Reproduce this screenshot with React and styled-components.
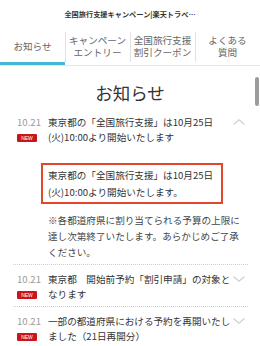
import React from 'react'
import styled, { createGlobalStyle } from 'styled-components'

const GlobalStyle = createGlobalStyle`
    body {
        margin: 0;
        background: #fff;
        font-family: "Noto Sans CJK JP", "Noto Sans", sans-serif;
        color: #333;
    }
`

const tabs = [
    ['お知らせ'],
    ['キャンペーン', 'エントリー'],
    ['全国旅行支援', '割引クーポン'],
    ['よくある', '質問'],
]

const Chevron = ({ up }) => (
    <ChevronBox viewBox="0 0 12 6">
        <polyline
            points={up ? '0.5,5.5 6,0.8 11.5,5.5' : '0.5,0.5 6,5.2 11.5,0.5'}
            fill="none"
            stroke="#cfcfcf"
            strokeWidth="1.1"
        />
    </ChevronBox>
)

const NewsHead = ({ lines, up }) => (
    <Head>
        <DateCol>
            <DateText>10.21</DateText>
            <NewBadge>NEW</NewBadge>
        </DateCol>
        <Title>
            {lines.map(l => <Line key={l}>{l}</Line>)}
        </Title>
        <Chevron up={up} />
    </Head>
)

const App = () => {
    return (
        <Page>
            <GlobalStyle />
            <TopBar>全国旅行支援キャンペーン|楽天トラベ…</TopBar>
            <TabBar>
                {tabs.map((t, i) => (
                    <Tab key={i} active={i === 0} first={i === 0}>
                        {t.map(l => <Line key={l}>{l}</Line>)}
                    </Tab>
                ))}
            </TabBar>
            <Heading>お知らせ</Heading>
            <List>
                <Item>
                    <NewsHead up lines={['東京都の「全国旅行支援」は10月25日', '(火)10:00より開始いたします']} />
                    <Body>
                        <Notice>
                            <Line>東京都の「全国旅行支援」は10月25日</Line>
                            <Line>(火)10:00より開始いたします。</Line>
                        </Notice>
                        <Note>
                            <Line>※各都道府県に割り当てられる予算の上限に</Line>
                            <Line>達し次第終了いたします。あらかじめご了承</Line>
                            <Line>ください。</Line>
                        </Note>
                    </Body>
                </Item>
                <Item>
                    <NewsHead lines={['東京都　開始前予約「割引申請」の対象と', 'なります']} />
                </Item>
                <Item>
                    <NewsHead lines={['一部の都道府県における予約を再開いたし', 'ました（21日再開分）']} />
                </Item>
            </List>
            <ScrollThumb />
        </Page>
    )
}

const Page = styled.div`
    position: relative;
    width: 260px;
    height: 346px;
    overflow: hidden;
`

const TopBar = styled.div`
    height: 30px;
    display: flex;
    align-items: center;
    justify-content: center;
    font-size: 7.2px;
    font-weight: bold;
    color: #333;
    padding-bottom: 2px;
    box-sizing: border-box;
`

const TabBar = styled.div`
    display: flex;
    height: 36px;
    border-bottom: 1px solid #e6e6e6;
    box-sizing: border-box;
`

const Tab = styled.div`
    position: relative;
    flex: 1;
    display: flex;
    flex-direction: column;
    align-items: center;
    justify-content: center;
    padding-bottom: 3px;
    font-size: 9.6px;
    line-height: 12.5px;
    color: #666;

    &::before {
        content: '';
        display: ${p => (p.first ? 'none' : 'block')};
        position: absolute;
        left: 0;
        top: 2px;
        bottom: 3px;
        border-left: 1px solid #e2e2e2;
    }

    &::after {
        content: '';
        display: ${p => (p.active ? 'block' : 'none')};
        position: absolute;
        left: 0;
        right: 0;
        bottom: 0;
        height: 3px;
        background: #45b6d6;
    }
`

const Line = styled.span`
    display: block;
    white-space: nowrap;
`

const Heading = styled.h1`
    margin: 0;
    padding: 15px 0 3px;
    text-align: center;
    font-size: 17.5px;
    line-height: 24px;
    font-weight: normal;
    color: #333;
`

const List = styled.div`
    padding: 0 12px 0 13px;
`

const Item = styled.div`
    padding: 7px 0 4px 4px;
    border-bottom: 1px dotted #cfcfcf;
`

const Head = styled.div`
    display: flex;
    align-items: flex-start;
`

const DateCol = styled.div`
    width: 31px;
    flex-shrink: 0;
    display: flex;
    flex-direction: column;
    align-items: flex-start;
`

const DateText = styled.span`
    font-size: 9.6px;
    line-height: 15px;
    color: #9a9a9a;
`

const NewBadge = styled.span`
    margin-top: 4px;
    width: 20px;
    height: 8px;
    border-radius: 1px;
    background: #c8161d;
    color: #fff;
    font-size: 5px;
    line-height: 8px;
    text-align: center;
    font-family: "Liberation Sans", sans-serif;
`

const Title = styled.div`
    flex: 1;
    font-size: 9.6px;
    line-height: 15px;
    color: #333;
`

const ChevronBox = styled.svg`
    width: 12px;
    height: 6px;
    margin: 4px 3px 0 0;
    flex-shrink: 0;
`

const Body = styled.div`
    margin: 18px 0 0 24px;
    padding-bottom: 0;
`

const Notice = styled.div`
    width: 182px;
    box-sizing: border-box;
    border: 2px solid #e2472b;
    padding: 2px 5px 1px;
    font-size: 9.6px;
    line-height: 17px;
    color: #333;
`

const Note = styled.div`
    margin: 8px 0 0 7px;
    font-size: 9.6px;
    line-height: 16px;
    color: #444;
`

const ScrollThumb = styled.div`
    position: absolute;
    right: 1px;
    top: 77px;
    width: 4px;
    height: 29px;
    border-radius: 2px;
    background: #9c9c9c;
`

export default App
